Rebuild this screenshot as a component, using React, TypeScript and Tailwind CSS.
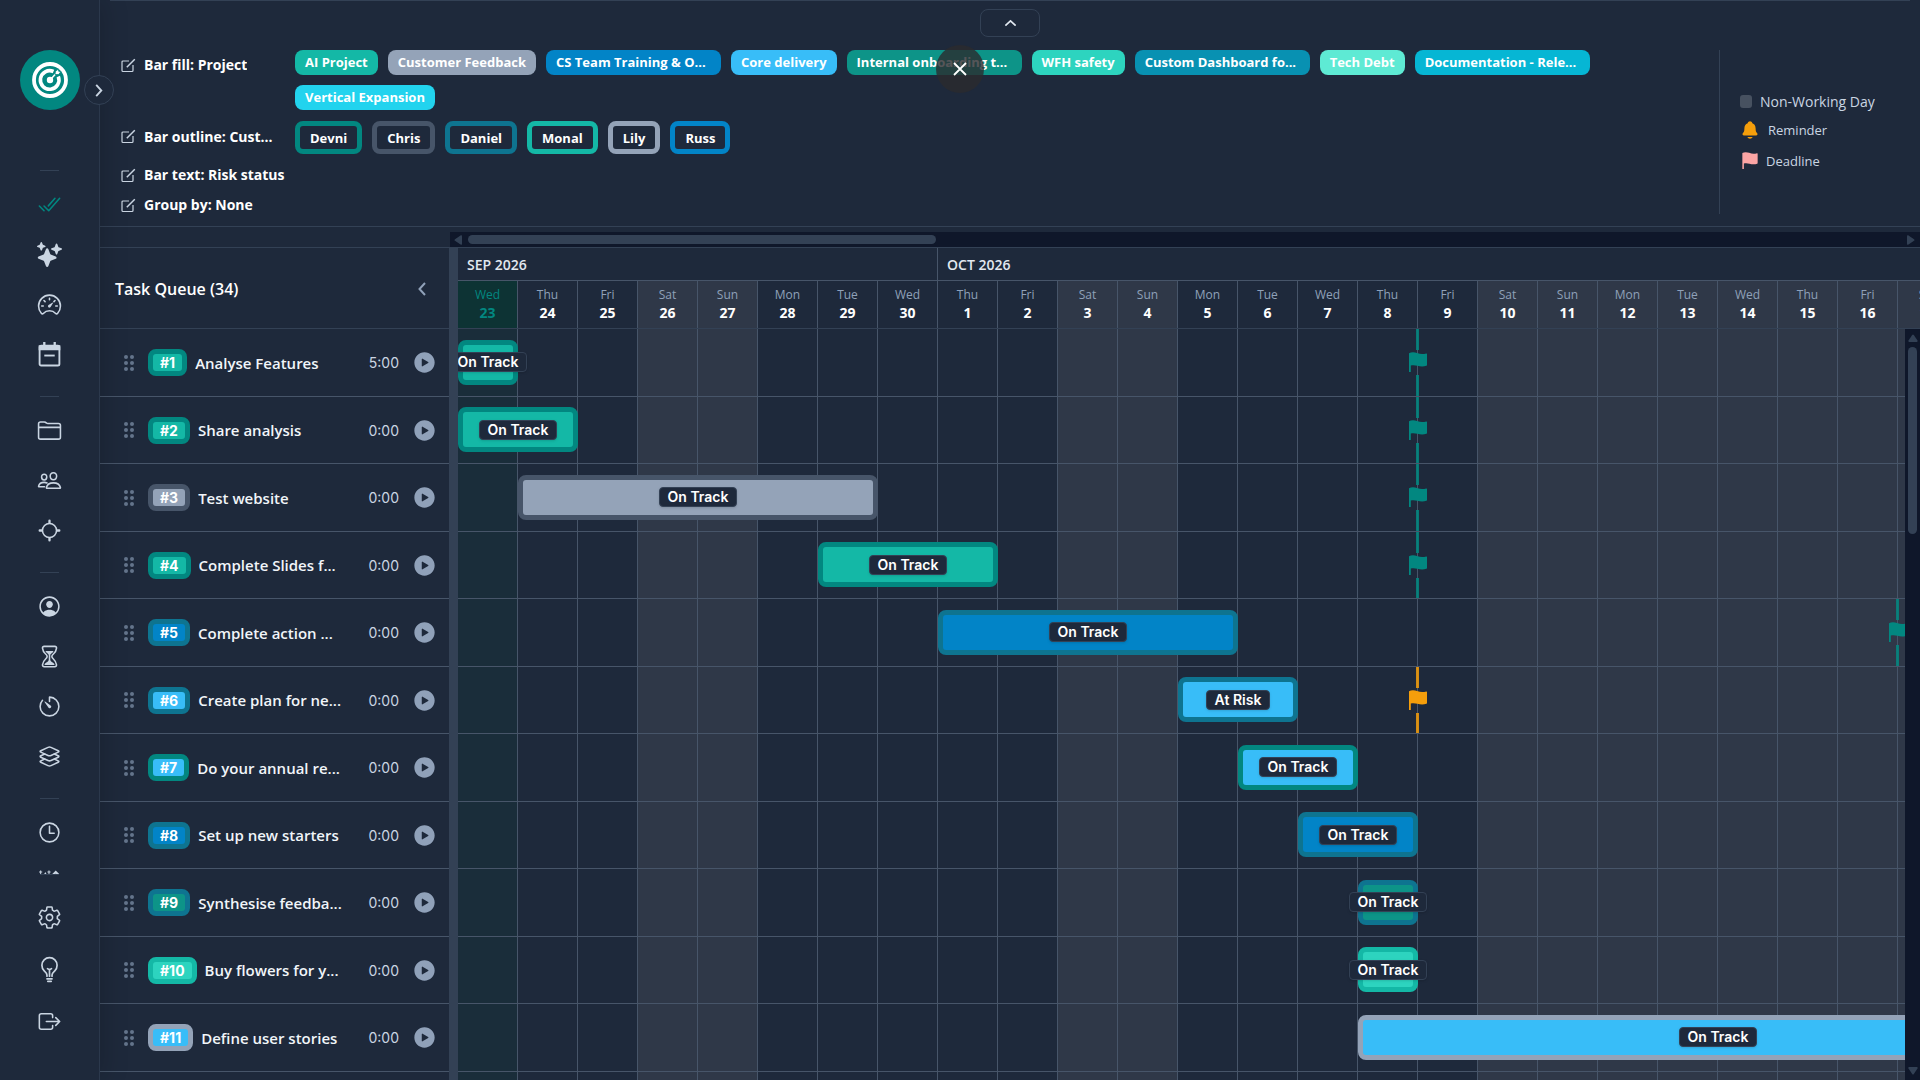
import {
    IoBulbOutline,
    IoCheckmarkDoneOutline,
    IoExitOutline,
    IoFolderOutline,
    IoHourglassOutline,
    IoLayersOutline,
    IoLocateOutline,
    IoNotifications,
    IoPeopleOutline,
    IoPersonCircleOutline,
    IoPlayCircle,
    IoSettingsOutline,
    IoSparkles,
    IoSpeedometerOutline,
    IoTimeOutline,
    IoTimerOutline,
} from "react-icons/io5";

const projects = [
    { name: "AI Project", color: "bg-[#14b8a6]" },
    { name: "Customer Feedback", color: "bg-[#94a3b8]" },
    { name: "CS Team Training & O...", color: "w-[175px] bg-[#0284c7]" },
    { name: "Core delivery", color: "bg-[#38bdf8]" },
    { name: "Internal onboarding t...", color: "w-[175px] bg-[#0d9488]" },
    { name: "WFH safety", color: "bg-[#2dd4bf]" },
    { name: "Custom Dashboard fo...", color: "w-[175px] bg-[#0891b2]" },
    { name: "Tech Debt", color: "bg-[#5eead4]" },
    { name: "Documentation - Rele...", color: "w-[175px] bg-[#06b6d4]" },
    { name: "Vertical Expansion", color: "bg-[#22d3ee]" },
];

const people = [
    { name: "Devni", color: "border-[#028780]" },
    { name: "Chris", color: "border-[#475569]" },
    { name: "Daniel", color: "border-[#0e7490]" },
    { name: "Monal", color: "border-[#14b8a6]" },
    { name: "Lily", color: "border-[#94a3b8]" },
    { name: "Russ", color: "border-[#0284c7]" },
];

const weekdays = ["Wed", "Thu", "Fri", "Sat", "Sun", "Mon", "Tue"];

const days = Array.from({ length: 25 }, (_, i) => ({
    name: weekdays[i % 7],
    date: i < 8 ? 23 + i : i - 7,
    today: i === 0,
    off: i % 7 === 3 || i % 7 === 4 || i >= 17,
}));

// start and span are counted in day columns, flag is the column it stands before
const tasks = [
    { title: "Analyse Features", time: "5:00", colors: "bg-[#14b8a6] border-[#028780]", start: 0, span: 1, status: "On Track", flag: 16, flagColor: "text-[#028780]" },
    { title: "Share analysis", time: "0:00", colors: "bg-[#14b8a6] border-[#028780]", start: 0, span: 2, status: "On Track", flag: 16, flagColor: "text-[#028780]" },
    { title: "Test website", time: "0:00", colors: "bg-[#94a3b8] border-[#475569]", start: 1, span: 6, status: "On Track", flag: 16, flagColor: "text-[#028780]" },
    { title: "Complete Slides f...", time: "0:00", colors: "bg-[#14b8a6] border-[#028780]", start: 6, span: 3, status: "On Track", flag: 16, flagColor: "text-[#028780]" },
    { title: "Complete action ...", time: "0:00", colors: "bg-[#0284c7] border-[#0e7490]", start: 8, span: 5, status: "On Track", flag: 24, flagColor: "text-[#028780]" },
    { title: "Create plan for ne...", time: "0:00", colors: "bg-[#38bdf8] border-[#0e7490]", start: 12, span: 2, status: "At Risk", flag: 16, flagColor: "text-[#f59e0b]" },
    { title: "Do your annual re...", time: "0:00", colors: "bg-[#38bdf8] border-[#028780]", start: 13, span: 2, status: "On Track" },
    { title: "Set up new starters", time: "0:00", colors: "bg-[#0284c7] border-[#0e7490]", start: 14, span: 2, status: "On Track" },
    { title: "Synthesise feedba...", time: "0:00", colors: "bg-[#0d9488] border-[#0e7490]", start: 15, span: 1, status: "On Track" },
    { title: "Buy flowers for y...", time: "0:00", colors: "bg-[#2dd4bf] border-[#14b8a6]", start: 15, span: 1, status: "On Track" },
    { title: "Define user stories", time: "0:00", colors: "bg-[#38bdf8] border-[#94a3b8]", start: 15, span: 12, status: "On Track" },
];

function Logo() {
    return (
        <svg viewBox="0 0 60 60" className="size-[60px]">
            <circle cx="30" cy="30" r="30" fill="#028780" />
            <circle cx="30" cy="30" r="16" fill="none" stroke="#fff" strokeWidth="3.800" />
            <path d="M38.300 26.500A9.300 9.300 0 1 1 33.500 21.500" fill="none" stroke="#fff" strokeWidth="3.600" />
            <circle cx="30" cy="30" r="3.200" fill="#fff" />
            <path d="M30 30l6.500-7" stroke="#fff" strokeWidth="1.600" />
            <path d="M35 24.500l.4-3 3-2.500.3 2.300 2.300.3-2.500 3z" fill="#fff" stroke="#028780" strokeWidth="0.800" />
        </svg>
    );
}

function CalendarIcon() {
    return (
        <svg viewBox="0 0 24 24" className="size-[25px]" fill="none" stroke="currentColor" strokeWidth="1.800">
            <rect x="2.500" y="3.500" width="19" height="19" rx="1.500" />
            <path d="M2.500 4h19v3h-19z" fill="currentColor" />
            <path d="M7 0v4M17 0v4" strokeWidth="2.200" />
            <path d="M7 13h10" />
        </svg>
    );
}

function SkylineIcon() {
    return (
        <svg viewBox="0 1.500 24 24" className="size-[25px]" fill="currentColor">
            <path d="M3 2h1v1h1v1H4v2H3V4H2V3h1zM6.500 6l1.500-2.500L9.500 6zM11 2h1v1h1v1h-1v2h-1V4h-1V3h1zM14 6l4-4 4 4-1 1-3-2-3 2z" />
        </svg>
    );
}

function EditIcon() {
    return (
        <svg viewBox="0 0 15 15" className="size-[15px] shrink-0 text-slate-300" fill="none" stroke="currentColor">
            <path d="M8 3H2a1 1 0 0 0-1 1v8.500a1 1 0 0 0 1 1h9a1 1 0 0 0 1-1V7" strokeWidth="1.200" />
            <path d="M5.800 9.200L13.800 1.200" strokeWidth="1.500" />
        </svg>
    );
}

function Flag({ className }: { className?: string }) {
    return (
        <svg viewBox="0 0 18 20" className={className} fill="currentColor">
            <path d="M0 1.200C2 0 5.500 0 8 1c3.500 1.400 6.500 1.200 9.200.4.500-.1.800.1.800.6v11c0 .4-.2.600-.6.800-3 1-6 .8-9 0-2.500-.8-4.700-.8-6.600-.3V20H0z" />
        </svg>
    );
}

function Chevron({ className }: { className?: string }) {
    return (
        <svg viewBox="0 0 8 14" className={className} fill="none" stroke="currentColor" strokeWidth="2">
            <path d="M7 1L1.500 7 7 13" />
        </svg>
    );
}

function ScrollArrow({ className }: { className?: string }) {
    return (
        <svg viewBox="0 0 8 10" className={className} fill="#334155">
            <path d="M6.500.5 1 4.200a1 1 0 0 0 0 1.600l5.500 3.700c.7.400 1.500 0 1.500-.8V1.300C8 .5 7.200.1 6.500.5z" />
        </svg>
    );
}

const navGroups = [
    [
        { label: "Tasks", icon: <IoCheckmarkDoneOutline size={25} />, active: true },
        { label: "Assistant", icon: <IoSparkles size={25} /> },
        { label: "Dashboard", icon: <IoSpeedometerOutline size={25} /> },
        { label: "Calendar", icon: <CalendarIcon /> },
    ],
    [
        { label: "Projects", icon: <IoFolderOutline size={25} /> },
        { label: "Customers", icon: <IoPeopleOutline size={25} /> },
        { label: "Focus", icon: <IoLocateOutline size={25} /> },
    ],
    [
        { label: "Profile", icon: <IoPersonCircleOutline size={25} /> },
        { label: "Timesheets", icon: <IoHourglassOutline size={25} /> },
        { label: "Timer", icon: <IoTimerOutline size={25} /> },
        { label: "Templates", icon: <IoLayersOutline size={25} /> },
    ],
    [
        { label: "History", icon: <IoTimeOutline size={25} /> },
        { label: "Scenery", icon: <SkylineIcon /> },
    ],
];

const footerLinks = [
    { label: "Settings", icon: <IoSettingsOutline size={25} /> },
    { label: "Ideas", icon: <IoBulbOutline size={27} /> },
    { label: "Sign out", icon: <IoExitOutline size={25} /> },
];

function Sidebar() {
    return (
        <aside className="relative z-20 flex w-[100px] shrink-0 flex-col items-center border-r border-[#2b384c] bg-[#1e293b] text-slate-300 shadow-[4px_0_24px_rgba(0,0,0,0.15)]">
            <div className="flex h-[170px] shrink-0 items-start pt-[50px]">
                <a href="#" aria-label="Home"><Logo /></a>
            </div>
            <button aria-label="Expand menu" className="absolute top-[75px] -right-[15px] flex size-[30px] items-center justify-center rounded-full border border-[#334155] bg-[#1e293b]">
                <Chevron className="h-[13px] w-2 rotate-180" />
            </button>

            <nav className="flex min-h-0 flex-1 flex-col overflow-hidden">
                {navGroups.map((group, g) => (
                    <div key={g} className="mt-[17px] flex flex-col items-center first:mt-0">
                        <hr className="mb-2 w-[19px] border-[#334155]" />
                        {group.map((item) => (
                            <a
                                key={item.label}
                                href="#"
                                aria-label={item.label}
                                className={`flex h-[50px] w-[61px] items-center justify-center ${item.active ? "text-[#028780]" : ""}`}
                            >
                                {item.icon}
                            </a>
                        ))}
                    </div>
                ))}
            </nav>

            <div className="flex shrink-0 flex-col items-center pb-[33px]">
                <hr className="mb-4 w-[19px] border-[#334155]" />
                {footerLinks.map((item) => (
                    <a key={item.label} href="#" aria-label={item.label} className="flex h-[52px] w-[61px] items-center justify-center">
                        {item.icon}
                    </a>
                ))}
            </div>
        </aside>
    );
}

function Setting({ label, className }: { label: string; className: string }) {
    return (
        <button className={`flex items-center gap-2 text-left text-[14px] leading-5 font-bold text-white ${className}`}>
            <EditIcon />
            <span className="truncate">{label}</span>
        </button>
    );
}

function Options() {
    return (
        <section className="relative shrink-0 border-b border-[#334155]">
            <div className="mx-[10px] flex justify-center border-t border-[#334155] pt-2">
                <button aria-label="Collapse" className="flex h-[28px] w-[60px] items-center justify-center rounded-lg border border-[#334155] text-slate-200">
                    <Chevron className="h-[12px] w-[7px] rotate-90" />
                </button>
            </div>

            <div className="mt-[13px] mb-3 flex h-[164px]">
                <div className="grid flex-1 grid-cols-[174px_1fr] content-start pl-[21px]">
                    <Setting label="Bar fill: Project" className="h-[30px]" />
                    <div className="flex flex-wrap gap-[10px]">
                        {projects.map((p) => (
                            <span key={p.name} className={`h-[25px] overflow-hidden rounded-lg px-[10px] text-[13px] leading-[25px] font-bold whitespace-nowrap text-white ${p.color}`}>
                                {p.name}
                            </span>
                        ))}
                    </div>
                    <Setting label="Bar outline: Cust..." className="mt-[10px] h-[33px]" />
                    <div className="mt-[11px] flex gap-[10px]">
                        {people.map((p) => (
                            <span key={p.name} className={`h-[33px] rounded-lg border-5 px-[10px] text-[13px] leading-[24px] font-bold text-white ${p.color}`}>
                                {p.name}
                            </span>
                        ))}
                    </div>
                    <Setting label="Bar text: Risk status" className="col-span-2 mt-[10px] h-[22px]" />
                    <Setting label="Group by: None" className="col-span-2 mt-[8px] h-[22px]" />
                </div>

                <ul className="flex w-[201px] flex-col justify-center border-l border-[#334155] pb-[2px] pl-5 text-[13px] leading-5 font-medium text-slate-300">
                    <li className="flex items-center gap-2 text-[14px]">
                        <span className="h-[13px] w-3 rounded-[3px] bg-[#475160]" />
                        Non-Working Day
                    </li>
                    <li className="mt-2 flex items-center gap-2">
                        <IoNotifications size={20} className="text-[#f59e0b]" />
                        Reminder
                    </li>
                    <li className="mt-[11px] flex items-center gap-2">
                        <Flag className="ml-[2px] h-[17px] w-4 text-[#fca5a5]" />
                        Deadline
                    </li>
                </ul>
            </div>
        </section>
    );
}

function TaskList() {
    return (
        <div className="flex w-[349px] shrink-0 flex-col border-t border-[#334155]">
            <div className="flex h-[81px] shrink-0 items-center justify-between border-b border-[#334155] pt-[2px] pr-[23px] pl-[15px]">
                <h2 className="text-[16px] font-semibold text-white">Task Queue (34)</h2>
                <button aria-label="Collapse task queue" className="text-slate-400">
                    <Chevron className="h-[14px] w-2" />
                </button>
            </div>
            <ul>
                {tasks.map((task, i) => (
                    <li key={task.title} className="flex items-center border-b border-[#475569] pr-3 pl-6 odd:h-[68px] even:h-[67px]">
                        <span className="grid shrink-0 grid-cols-2 gap-[2px]">
                            {[0, 1, 2, 3, 4, 5].map((d) => (
                                <span key={d} className="size-[4px] rounded-full bg-[#64748b]" />
                            ))}
                        </span>
                        <span className={`ml-[14px] rounded-lg border-5 px-[7px] font-[Inter,sans-serif] text-[14px] leading-[17px] font-bold text-white ${task.colors}`}>
                            #{i + 1}
                        </span>
                        <span className="ml-2 flex-1 truncate text-[15px] leading-5 font-semibold text-slate-100">{task.title}</span>
                        <span className="font-[Inter,sans-serif] text-[14px] text-slate-300">{task.time}</span>
                        <button aria-label={`Start ${task.title}`} className="ml-[13px] text-slate-400">
                            <IoPlayCircle size={25} />
                        </button>
                    </li>
                ))}
            </ul>
        </div>
    );
}

function TimelineHeader() {
    return (
        <div className="shrink-0 overflow-hidden border-b border-[#334155]">
            <div className="grid h-[33px] grid-cols-[480px_1fr] border-b border-[#475569] text-[14px] leading-[33px] font-semibold text-slate-200">
                <div className="border-r border-[#475569] pl-[9px]">SEP 2026</div>
                <div className="pl-[9px]">OCT 2026</div>
            </div>
            <div className="grid h-[47px] grid-cols-[repeat(27,60px)]">
                {days.map((day, i) => (
                    <div
                        key={i}
                        className={`border-r border-[#475569] pt-[5px] text-center ${day.today ? "bg-[#0d3334] text-[#028780]" : day.off ? "bg-[#2f3848] text-white" : "text-white"}`}
                    >
                        <div className={`text-[12px] leading-[18px] ${day.today ? "" : "text-slate-400"}`}>{day.name}</div>
                        <div className="text-[14px] leading-[18px] font-bold">{day.date}</div>
                    </div>
                ))}
            </div>
        </div>
    );
}

function DayCells() {
    return (
        <>
            {days.map((day, i) => (
                <div
                    key={i}
                    className={`row-start-1 h-full border-r border-[#475569] ${day.today ? "bg-[#1a2d3a]" : day.off ? "bg-[#2f3848]" : ""}`}
                    style={{ gridColumnStart: i + 1 }}
                />
            ))}
        </>
    );
}

function Timeline() {
    return (
        <div className="min-w-0 flex-1 overflow-hidden">
            {tasks.map((task) => (
                <div key={task.title} className="grid grid-cols-[repeat(27,60px)] items-center border-b border-[#475569] odd:h-[68px] even:h-[67px]">
                    <DayCells />
                    <div
                        className={`z-10 row-start-1 mb-px flex h-[45px] items-center justify-center rounded-lg border-5 ${task.colors}`}
                        style={{ gridColumn: `${task.start + 1} / span ${task.span}` }}
                    >
                        <span className="shrink-0 rounded-[4px] border border-[#334155] bg-[#1e293b] px-2 font-[Inter,sans-serif] text-[14px] leading-[18px] font-semibold whitespace-nowrap text-white shadow-sm">
                            {task.status}
                        </span>
                    </div>
                    {task.flag && (
                        <div
                            className={`row-start-1 -ml-[9px] flex h-full w-[18px] flex-col ${task.flagColor}`}
                            style={{ gridColumnStart: task.flag + 1 }}
                        >
                            <span className="ml-[7px] w-[3px] flex-1 bg-current opacity-85" />
                            <Flag className="mt-[2px] mb-[3px] h-5 w-[18px]" />
                            <span className="ml-[7px] w-[3px] flex-1 bg-current opacity-85" />
                        </div>
                    )}
                </div>
            ))}
            <div className="grid h-[68px] grid-cols-[repeat(27,60px)]">
                <DayCells />
            </div>
        </div>
    );
}

export default function App() {
    return (
        <div className="relative flex h-screen overflow-hidden bg-[#1e293b] font-['Open_Sans','Noto_Sans',sans-serif]">
            <Sidebar />

            <main className="flex min-w-0 flex-1 flex-col">
                <Options />

                {/* Horizontal scrollbar */}
                <div className="mt-[5px] ml-[350px] flex h-[15px] shrink-0 items-center bg-[#0f172a] pr-[5px] pl-1">
                    <ScrollArrow className="h-[10px] w-2" />
                    <div className="ml-[6px] h-[9px] w-[468px] rounded-full bg-[#334155]" />
                    <ScrollArrow className="ml-auto h-[10px] w-2 rotate-180" />
                </div>

                <div className="flex min-h-0 flex-1">
                    <TaskList />
                    <div className="w-[9px] shrink-0 bg-[#334155]" />
                    <div className="flex min-w-0 flex-1 flex-col border-t border-[#334155]">
                        <TimelineHeader />
                        <div className="flex min-h-0 flex-1">
                            <Timeline />
                            {/* Vertical scrollbar */}
                            <div className="flex w-[15px] shrink-0 flex-col items-center bg-[#0f172a] py-1">
                                <ScrollArrow className="h-[10px] w-2 rotate-90" />
                                <div className="mt-1 h-[187px] w-[9px] rounded-full bg-[#334155]" />
                                <ScrollArrow className="mt-auto h-[10px] w-2 -rotate-90" />
                            </div>
                        </div>
                    </div>
                </div>
            </main>

            <button aria-label="Close" className="absolute top-[45px] left-1/2 z-30 flex size-12 -translate-x-1/2 items-center justify-center rounded-full bg-[#2a2a2e]/80 text-white">
                <svg viewBox="0 0 14 14" className="size-[14px]" stroke="currentColor" strokeWidth="1.800">
                    <path d="M1 1l12 12M13 1L1 13" />
                </svg>
            </button>
        </div>
    );
}
